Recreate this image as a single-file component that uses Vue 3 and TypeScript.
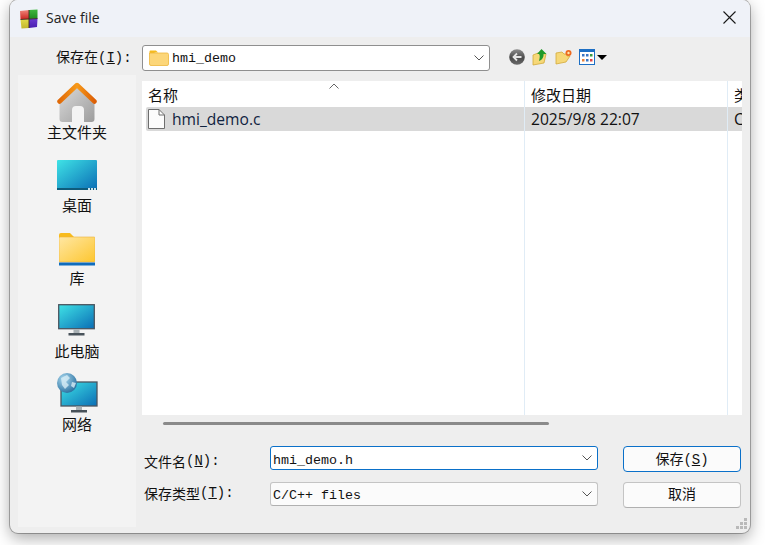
<script setup lang="ts">
interface Place { label: string; kind: string }
const places: Place[] = [
  { label: '主文件夹', kind: 'home' },
  { label: '桌面', kind: 'desktop' },
  { label: '库', kind: 'library' },
  { label: '此电脑', kind: 'pc' },
  { label: '网络', kind: 'net' },
]
</script>

<template>
  <div class="page">
    <div class="window">
      <header class="titlebar">
        <svg class="appicon" width="20" height="20" viewBox="0 0 20 20">
          <defs>
            <linearGradient id="ar" x1="0" y1="0" x2="0" y2="1"><stop offset="0" stop-color="#f0867a" /><stop offset="1" stop-color="#c9231f" /></linearGradient>
            <linearGradient id="ag" x1="0" y1="0" x2="0" y2="1"><stop offset="0" stop-color="#3fb83f" /><stop offset="1" stop-color="#1f8a1f" /></linearGradient>
            <linearGradient id="ay" x1="0" y1="0" x2="0" y2="1"><stop offset="0" stop-color="#e2dc4a" /><stop offset="1" stop-color="#c2b52c" /></linearGradient>
            <linearGradient id="ap" x1="0" y1="0" x2="0" y2="1"><stop offset="0" stop-color="#6a3ad0" /><stop offset="1" stop-color="#4a1fb0" /></linearGradient>
          </defs>
          <path d="M1 2 L10 1 L10 10 L1.500 10.500Z" fill="url(#ar)" />
          <path d="M10 1 L18.500 .5 L18.500 9.500 L10 10Z" fill="url(#ag)" />
          <path d="M1.500 10.500 L10 10 L10 19 L2.500 19.500Z" fill="url(#ay)" />
          <path d="M10 10 L18.500 9.500 L18 18 L10 19Z" fill="url(#ap)" />
          <path d="M10 1 V19 M1.500 10.500 L18.500 9.500" stroke="#3a2a20" stroke-width=".9" />
        </svg>
        <span class="title">Save file</span>
        <svg class="close" width="13" height="13" viewBox="0 0 13 13">
          <path d="M.5 .5 L12.500 12.500 M12.500 .5 L.5 12.500" stroke="#1a1a1a" stroke-width="1.100" />
        </svg>
      </header>

      <div class="toolbar">
        <span class="lookin">保存在<span class="pm">(<u>I</u>):</span></span>
        <div class="combo path">
          <svg width="20" height="16" viewBox="0 0 20 16">
            <path d="M.5 1.500 A1 1 0 0 1 1.500 .5 H7 L9 2.500 H7 L.5 4Z" fill="#f5bb1f" />
            <path d="M.5 3 H18 A1.500 1.500 0 0 1 19.500 4.500 V14 A1.500 1.500 0 0 1 18 15.500 H2 A1.500 1.500 0 0 1 .5 14Z" fill="#fcd679" stroke="#eeb63c" stroke-width=".8" />
          </svg>
          <span class="mono">hmi_demo</span>
          <svg class="chev" width="10" height="6" viewBox="0 0 10 6"><path d="M.5 .5 L5 5 L9.500 .5" fill="none" stroke="#555" stroke-width="1" /></svg>
        </div>
        <div class="tools">
          <svg width="16" height="16" viewBox="0 0 16 16">
            <defs><linearGradient id="bk" x1="0" y1="0" x2="0" y2="1"><stop offset="0" stop-color="#8d8d8d" /><stop offset=".55" stop-color="#4a4a4a" /><stop offset="1" stop-color="#6a6a6a" /></linearGradient></defs>
            <circle cx="8" cy="8" r="7.800" fill="url(#bk)" />
            <path d="M8 4.500 L4.500 8 L8 11.500 M4.500 8 H12.500" stroke="#e4e4e4" stroke-width="1.800" fill="none" />
          </svg>
          <svg width="16" height="18" viewBox="0 0 16 18">
            <path d="M1 7 L6 5 L14 6 L12 15 L1 17Z" fill="#f6d878" stroke="#d3a93a" stroke-width=".8" />
            <path d="M7 13 C8 9 8 7 7 6 L5 6 L9.500 1 L14.500 6 L11.500 6 C12 9 10 12 7 13Z" fill="#1f9a2a" />
          </svg>
          <svg width="18" height="16" viewBox="0 0 18 16">
            <path d="M1 4 L7 3 L9 5 L12 5 L12 7 L15 7 L11 13 L1 15Z" fill="#f6d878" stroke="#d3a93a" stroke-width=".8" />
            <circle cx="13.500" cy="4" r="3" fill="#ee6a1f" />
            <circle cx="13.500" cy="4" r="1.200" fill="#ffe9a8" />
          </svg>
          <span class="view">
            <svg width="16" height="16" viewBox="0 0 16 16">
              <rect x=".5" y=".5" width="15" height="15" fill="#fff" stroke="#1d6fc4" />
              <rect x="0" y="0" width="16" height="3" fill="#1d6fc4" />
              <rect x="3" y="5" width="2.500" height="2.500" fill="#3a76c4" />
              <rect x="7" y="5" width="2.500" height="2.500" fill="#3a76c4" />
              <rect x="11" y="5" width="2.500" height="2.500" fill="#3a9a44" />
              <rect x="3" y="10" width="2.500" height="2.500" fill="#e8823a" />
              <rect x="7" y="10" width="2.500" height="2.500" fill="#3a76c4" />
              <rect x="11" y="10" width="2.500" height="2.500" fill="#d44" />
            </svg>
            <i class="caret"></i>
          </span>
        </div>
      </div>

      <div class="main">
        <aside class="sidebar">
          <div v-for="p in places" :key="p.kind" class="place" :class="p.kind">
            <svg v-if="p.kind === 'home'" width="40" height="40" viewBox="0 0 40 40">
              <defs>
                <linearGradient id="hm" x1="0" y1="0" x2="1" y2="1"><stop offset="0" stop-color="#dcdcdc" /><stop offset="1" stop-color="#9c9c9c" /></linearGradient>
                <linearGradient id="rf" x1="0" y1="0" x2="1" y2="0"><stop offset="0" stop-color="#e06a08" /><stop offset=".5" stop-color="#f79a1a" /><stop offset="1" stop-color="#dc5f05" /></linearGradient>
              </defs>
              <path d="M2.500 19 L20 4 L37.500 19 V37 A3 3 0 0 1 34.500 40 H27 V28 A4 4 0 0 0 23 24 H19 A4 4 0 0 0 15 28 V40 H5.500 A3 3 0 0 1 2.500 37Z" fill="url(#hm)" />
              <path d="M2.500 19.500 L20 3 L37.500 19.500" fill="none" stroke="url(#rf)" stroke-width="4.500" stroke-linecap="round" stroke-linejoin="round" />
            </svg>
            <svg v-else-if="p.kind === 'desktop'" width="40" height="30" viewBox="0 0 40 30">
              <defs><linearGradient id="dk" x1="0" y1="0" x2="1" y2="1"><stop offset="0" stop-color="#3fe3e6" /><stop offset="1" stop-color="#0a6db5" /></linearGradient></defs>
              <rect x="0" y="0" width="40" height="30" rx="1" fill="url(#dk)" />
              <rect x="0" y="28" width="40" height="2" fill="#0f5b7a" />
              <path d="M31 28 h2 v2 h-2z M34 28 h2 v2 h-2z M37 28 h2 v2 h-2z" fill="#cfe5ef" />
            </svg>
            <svg v-else-if="p.kind === 'library'" width="36" height="33" viewBox="0 0 36 33">
              <defs><linearGradient id="lb" x1="0" y1="0" x2="1" y2="1"><stop offset="0" stop-color="#ffe7a3" /><stop offset="1" stop-color="#fdc62f" /></linearGradient></defs>
              <path d="M0 2 A2 2 0 0 1 2 0 H11 L15 4 V8 H0Z" fill="#f8bb1c" />
              <rect x="0" y="4" width="36" height="25" rx="1" fill="url(#lb)" stroke="#ecb33a" stroke-width=".6" />
              <rect x="0" y="29.500" width="36" height="3" fill="#0f6cbd" />
            </svg>
            <svg v-else-if="p.kind === 'pc'" width="37" height="32" viewBox="0 0 37 32">
              <defs><linearGradient id="pc" x1="0" y1="0" x2="1" y2="1"><stop offset="0" stop-color="#3fe3e6" /><stop offset="1" stop-color="#0a6db5" /></linearGradient></defs>
              <rect x=".7" y=".7" width="35.600" height="24" fill="url(#pc)" stroke="#4a5560" stroke-width="1.300" />
              <rect x="15.500" y="25.500" width="6" height="4" fill="#a8b0b4" />
              <rect x="10.500" y="29" width="16" height="2.500" fill="#48525a" />
            </svg>
            <svg v-else width="42" height="42" viewBox="0 0 42 42">
              <defs>
                <linearGradient id="nt" x1="0" y1="0" x2="1" y2="1"><stop offset="0" stop-color="#3fe3e6" /><stop offset="1" stop-color="#0a6db5" /></linearGradient>
                <radialGradient id="gb" cx=".35" cy=".3" r=".8"><stop offset="0" stop-color="#a9d8ee" /><stop offset="1" stop-color="#20689a" /></radialGradient>
              </defs>
              <rect x="5" y="10" width="36" height="24" fill="url(#nt)" stroke="#4a5560" stroke-width="1.300" />
              <rect x="20" y="34.500" width="6" height="4" fill="#a8b0b4" />
              <rect x="15" y="38" width="16" height="2.500" fill="#48525a" />
              <circle cx="11" cy="11" r="10" fill="url(#gb)" />
              <path d="M5 6 L11 3 L14 6 L10 10 L13 13 L9 17 L6 13Z M16 10 L20 11 L18 16 L15 14Z" fill="#d7ecf5" opacity=".8" />
            </svg>
            <span class="place-label">{{ p.label }}</span>
          </div>
        </aside>

        <section class="content">
          <div class="list">
            <div class="row head">
              <span class="c name">名称<svg class="sort" width="10" height="6" viewBox="0 0 10 6"><path d="M.5 5.500 L5 1 L9.500 5.500" fill="none" stroke="#666" /></svg></span>
              <span class="c date">修改日期</span>
              <span class="c type">类</span>
            </div>
            <div class="row file">
              <span class="c name">
                <svg width="17" height="20" viewBox="0 0 17 20">
                  <path d="M.5 .5 H11 L16.500 6 V19.500 H.5Z" fill="#fcfcfc" stroke="#6e6e6e" />
                  <path d="M11 .5 V6 H16.500" fill="none" stroke="#6e6e6e" />
                </svg>
                <span class="fname">hmi_demo.c</span>
              </span>
              <span class="c date">2025/9/8 22:07</span>
              <span class="c type">C</span>
            </div>
            <i class="sep s1"></i><i class="sep s2"></i>
          </div>
          <div class="scrollbar"><i></i></div>
          <div class="form">
            <label class="lbl first">文件名<span class="pm">(<u>N</u>):</span></label>
            <div class="combo input focus"><span class="mono">hmi_demo.h</span><svg class="chev" width="10" height="6" viewBox="0 0 10 6"><path d="M.5 .5 L5 5 L9.500 .5" fill="none" stroke="#555" /></svg></div>
            <button class="btn primary">保存<span class="pm">(<u>S</u>)</span></button>
            <label class="lbl second">保存类型<span class="pm">(<u>T</u>):</span></label>
            <div class="combo input soft"><span class="mono">C/C++ files</span><svg class="chev" width="10" height="6" viewBox="0 0 10 6"><path d="M.5 .5 L5 5 L9.500 .5" fill="none" stroke="#555" /></svg></div>
            <button class="btn cancel">取消</button>
          </div>
        </section>
      </div>
      <svg class="grip" width="14" height="14" viewBox="0 0 14 14" fill="#b9b9b9">
        <rect x="9" y="0" width="3" height="3" /><rect x="5" y="4" width="3" height="3" /><rect x="9" y="4" width="3" height="3" />
        <rect x="1" y="8" width="3" height="3" /><rect x="5" y="8" width="3" height="3" /><rect x="9" y="8" width="3" height="3" />
      </svg>
    </div>
  </div>
</template>

<style>
html, body { margin: 0; background: #fff; overflow: hidden; }
</style>

<style scoped>
.page {
  width: 765px; height: 545px; padding-left: 10px; box-sizing: border-box; overflow: hidden;
  background: #fff;
  font-family: "Noto Sans CJK SC", "Liberation Sans", sans-serif; color: #111;
}
.window {
  position: relative; width: 740px; height: 533px; background: #eeeeee;
  border-radius: 8px; box-shadow: 0 0 0 1px rgba(0,0,0,.28), 0 5px 16px rgba(0,0,0,.34); overflow: hidden;
}
.titlebar { height: 37px; background: #eff2f8; display: flex; align-items: center; padding: 0 14px 3px 9px; box-sizing: border-box; }
.appicon { margin-right: 7px; margin-top: 3px; }
.title { font: 14px "Open Sans", "Noto Sans", sans-serif; color: #222; flex: 1; margin-top: 1px; }
.toolbar { height: 38px; display: flex; align-items: center; padding-left: 46px; box-sizing: border-box; }
.lookin { width: 86px; font-size: 14px; white-space: nowrap; }
.pm { font-family: "Liberation Mono", monospace; font-size: 14px; }
.combo { display: flex; align-items: center; background: #fff; border: 1px solid #8f8f8f; border-radius: 3px; box-sizing: border-box; position: relative; }
.path { width: 348px; height: 26px; padding-left: 6px; gap: 3px; margin-top: 4px; }
.path .mono { padding-top: 2px; }
.chev { position: absolute; right: 5px; top: 50%; margin-top: -3px; }
.mono { font: 13.330px/1 "Liberation Mono", monospace; color: #111; white-space: pre; }
.tools { display: flex; align-items: center; gap: 7px; margin-left: 19px; margin-top: 2px; }
.tools svg { display: block; }
.view { display: flex; align-items: center; gap: 2px; margin-left: -1px; }
.caret { width: 0; height: 0; border: 5px solid transparent; border-top: 5px solid #000; border-bottom: 0; }
.main { display: flex; height: 452px; }
.sidebar { width: 118px; margin-left: 8px; background: #f3f3f3; display: flex; flex-direction: column; align-items: center; padding-top: 3px; box-sizing: border-box; }
.place { display: flex; flex-direction: column; align-items: center; height: 73px; justify-content: flex-end; }
.place svg { display: block; }
.place-label { font-size: 15px; line-height: 20px; height: 20px; }
.place.home { height: 64px; }
.place.home svg { margin-bottom: 0; }
.place.desktop svg { margin-bottom: 5px; }
.place.library svg { margin-bottom: 2px; }
.place.pc svg { margin-bottom: 5px; }
.place.net svg { margin-bottom: 0; }
.content { flex: 1; margin-left: 6px; display: flex; flex-direction: column; padding-top: 6px; }
.list { position: relative; width: 600px; height: 334px; background: #fff; font: 15.600px "Open Sans", "Noto Sans", "Noto Sans CJK SC", sans-serif; overflow: hidden; }
.row { display: flex; align-items: center; }
.head { height: 26px; font: 15px "Noto Sans CJK SC", sans-serif; }
.file { height: 24px; background: #d9d9d9; margin-left: 4px; border-radius: 2px 0 0 2px; }
.c { white-space: nowrap; display: flex; align-items: center; flex: none; }
.head .name { width: 383px; padding-left: 6px; box-sizing: border-box; position: relative; }
.file .name { width: 379px; padding-left: 2px; box-sizing: border-box; gap: 7px; }
.date { width: 203px; padding-left: 6px; box-sizing: border-box; }
.fname { color: #10233f; }
.type { padding-left: 6px; }
.sort { position: absolute; left: 187px; top: -1px; }
.sep { position: absolute; top: 0; bottom: 0; width: 1px; background: #e0ecf6; }
.s1 { left: 382px; }
.s2 { left: 585px; }
.scrollbar { height: 31px; display: flex; }
.scrollbar i { width: 386px; height: 3px; margin: 7px 0 0 21px; background: #8a8a8a; border-radius: 2px; }
.form { display: grid; grid-template-columns: 128px 328px 118px; row-gap: 10px; font-size: 14px; }
.lbl { display: flex; align-items: center; padding-left: 2px; white-space: pre; font-size: 14px; height: 26px; box-sizing: border-box; }
.lbl.first { padding-top: 4px; }
.lbl.second { padding-bottom: 5px; }
.input { height: 24px; padding-left: 2px; width: 328px; border-color: #c4c4c4; border-bottom-color: #b0b0b0; }
.focus { border-color: #0a70c9; }
.focus .mono { padding-top: 5px; }
.soft { background: #fbfbfb; }
.soft .mono { padding-top: 3px; }
.btn {
  width: 118px; height: 26px; margin-left: 25px; font: 14px "Noto Sans CJK SC", sans-serif; color: #111; padding: 0 0 2px;
  background: #fbfbfb; border: 1px solid #c4c4c4; border-bottom-color: #b0b0b0; border-radius: 4px;
}
.cancel { padding-bottom: 4px; }
.primary { border-color: #0a70c9; }
.grip { position: absolute; right: 1px; bottom: 1px; }
</style>
